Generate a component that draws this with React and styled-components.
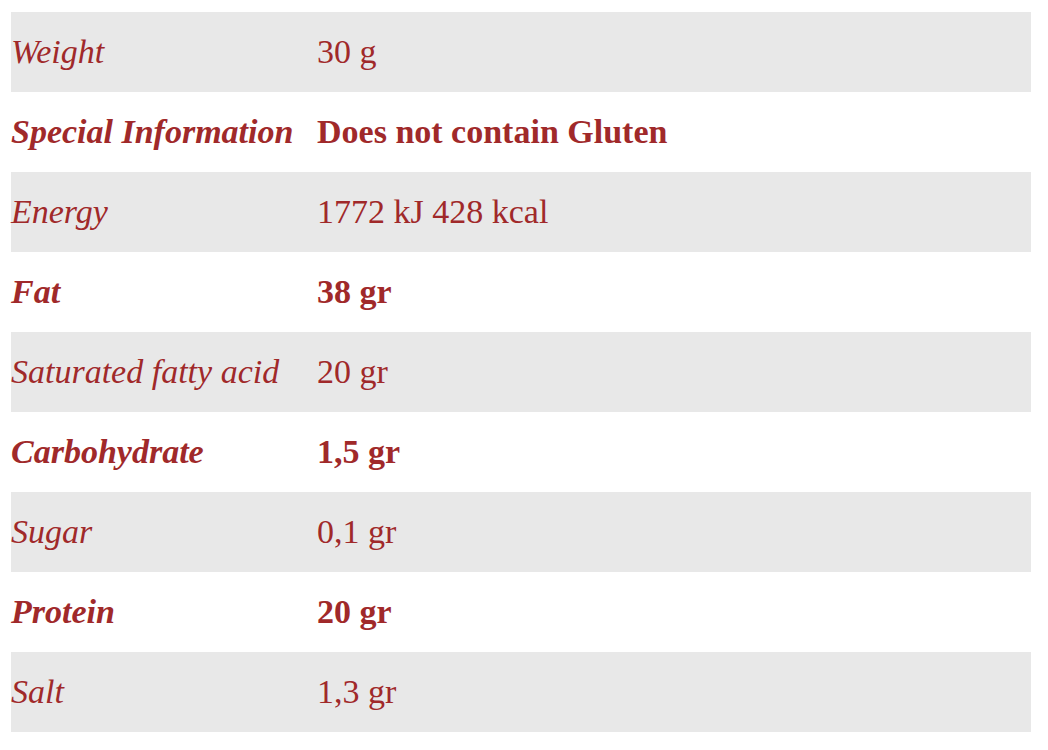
import React from "react";
import styled, { createGlobalStyle } from "styled-components";

const rows = [
  { label: "Weight", value: "30 g" },
  { label: "Special Information", value: "Does not contain Gluten", bold: true },
  { label: "Energy", value: "1772 kJ 428 kcal" },
  { label: "Fat", value: "38 gr", bold: true },
  { label: "Saturated fatty acid", value: "20 gr" },
  { label: "Carbohydrate", value: "1,5 gr", bold: true },
  { label: "Sugar", value: "0,1 gr" },
  { label: "Protein", value: "20 gr", bold: true },
  { label: "Salt", value: "1,3 gr" },
];

function App() {
  return (
    <>
      <GlobalStyle />
      <Table>
        {rows.map((row) => (
          <Row key={row.label} $bold={row.bold}>
            <Label>{row.label}</Label>
            <Value>{row.value}</Value>
          </Row>
        ))}
      </Table>
    </>
  );
}

export default App;

const GlobalStyle = createGlobalStyle`
  body {
    margin: 0;
    background: #ffffff;
    font-family: "Liberation Serif", "Times New Roman", serif;
  }
`;

const Table = styled.div`
  margin: 12px 17px 0 11px;
  display: flex;
  flex-direction: column;
`;

const Row = styled.div`
  display: grid;
  grid-template-columns: 306px 1fr;
  align-items: center;
  height: 80px;
  font-size: 34px;
  color: #a0292a;
  font-weight: ${(p) => (p.$bold ? 700 : 400)};

  &:nth-child(odd) {
    background: #e8e8e8;
  }
`;

const Label = styled.span`
  font-style: italic;
  white-space: nowrap;
`;

const Value = styled.span`
  white-space: nowrap;
`;
